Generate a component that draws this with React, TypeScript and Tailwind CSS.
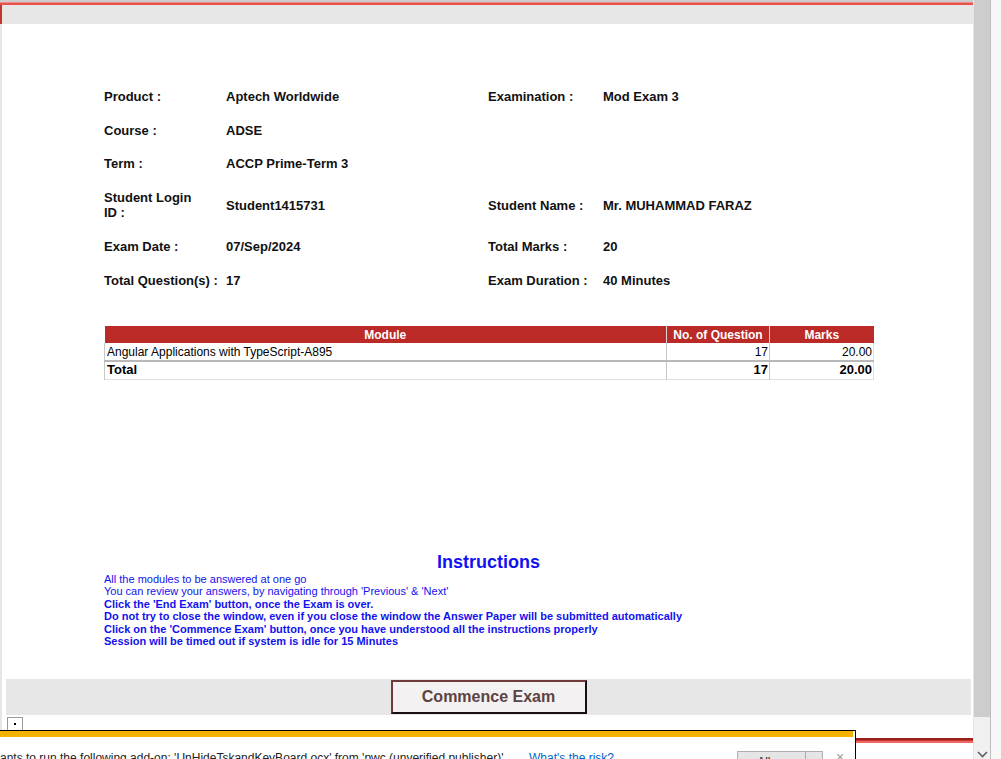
import React from 'react';

const info: [string, string, string, string][] = [
  ['Product :', 'Aptech Worldwide', 'Examination :', 'Mod Exam 3'],
  ['Course :', 'ADSE', '', ''],
  ['Term :', 'ACCP Prime-Term 3', '', ''],
  ['Student Login\nID :', 'Student1415731', 'Student Name :', 'Mr. MUHAMMAD FARAZ'],
  ['Exam Date :', '07/Sep/2024', 'Total Marks :', '20'],
  ['Total Question(s) :', '17', 'Exam Duration :', '40 Minutes'],
];

const rowHeights = ['h-[34px]', 'h-[34px]', 'h-[33px]', 'h-[50px]', 'h-[33px]', 'h-[34px]'];

const instructions = [
  { text: 'All the modules to be answered at one go', bold: false },
  { text: "You can review your answers, by navigating through 'Previous' & 'Next'", bold: false },
  { text: "Click the 'End Exam' button, once the Exam is over.", bold: true },
  { text: 'Do not try to close the window, even if you close the window the Answer Paper will be submitted automatically', bold: true },
  { text: "Click on the 'Commence Exam' button, once you have understood all the instructions properly", bold: true },
  { text: 'Session will be timed out if system is idle for 15 Minutes', bold: true },
];

function InfoGrid() {
  return (
    <div className="pl-[102px] pt-[55px]">
      {info.map((row, i) => (
        <div key={i} className={`flex items-center ${rowHeights[i]} text-[13px] font-bold text-[#111] leading-[15px]`}>
          <div className="w-[122px] whitespace-pre-line">{row[0]}</div>
          <div className="w-[262px]">{row[1]}</div>
          <div className="w-[115px]">{row[2]}</div>
          <div>{row[3]}</div>
        </div>
      ))}
    </div>
  );
}

function ModuleTable() {
  return (
    <div className="pl-[102px] pt-[29px]">
      <table className="w-[770px] border-collapse text-[12px] leading-[16px] text-black">
        <thead>
          <tr className="bg-[#bb2a26] text-white h-[17px]">
            <th className="font-bold text-center border-r border-[#d9d9d9]">Module</th>
            <th className="w-[103px] font-bold text-center border-r border-[#d9d9d9]">No. of Question</th>
            <th className="w-[104px] font-bold text-center">Marks</th>
          </tr>
        </thead>
        <tbody>
          <tr className="h-[18px] border-b-2 border-[#b8b8b8]">
            <td className="pl-[2px] border-l border-r border-[#c8c8c8]">Angular Applications with TypeScript-A895</td>
            <td className="text-right pr-[1px] border-r border-[#c8c8c8]">17</td>
            <td className="text-right pr-[1px] border-r border-[#e0e0e0]">20.00</td>
          </tr>
          <tr className="h-[18px] border-b border-[#e0e0e0] font-bold text-[13px]">
            <td className="pl-[2px] border-l border-r border-[#c8c8c8]">Total</td>
            <td className="text-right pr-[1px] border-r border-[#c8c8c8]">17</td>
            <td className="text-right pr-[1px] border-r border-[#e0e0e0]">20.00</td>
          </tr>
        </tbody>
      </table>
    </div>
  );
}

function Instructions() {
  return (
    <div className="pt-[171px] text-[#1212f0]">
      <div className="text-center text-[18px] font-bold leading-[22px] pl-[2px]">Instructions</div>
      <div className="pl-[102px] text-[11px] leading-[12.6px]">
        {instructions.map((ins, i) => (
          <div key={i} className={ins.bold ? 'font-bold' : ''}>{ins.text}</div>
        ))}
      </div>
    </div>
  );
}

function Notification() {
  return (
    <div className="absolute left-0 top-[730px] w-[856px] h-[29px] border-t border-r border-black bg-white font-['Liberation_Sans',Arial,sans-serif]">
      <div className="h-[6px] bg-[#f2b300] mr-[2px]" />
      <div className="h-[22px] relative">
        <span className="absolute left-0 top-[13px] text-[12px] text-[#222] whitespace-nowrap leading-[16px]">
          ants to run the following add-on: 'UnHideTskandKeyBoard.ocx' from 'pwc (unverified publisher)'.
        </span>
        <span className="absolute left-[529px] top-[13px] text-[12px] text-[#0066cc] leading-[16px]">What's the risk?</span>
        <div className="absolute left-[737px] top-[14px] flex h-[20px] border border-[#adadad] bg-[#e5e5e5]">
          <div className="w-[67px] text-center text-[12px] text-[#222] leading-[16px] pt-[2px]">Allow</div>
          <div className="w-[17px] border-l border-[#adadad] flex justify-center pt-[7px]">
            <div className="w-0 h-0 border-l-[4px] border-r-[4px] border-t-[5px] border-l-transparent border-r-transparent border-t-black" />
          </div>
        </div>
        <span className="absolute left-[836px] top-[12px] text-[14px] text-[#999] leading-[16px]">×</span>
      </div>
    </div>
  );
}

export default function App() {
  return (
    <div className="relative w-[1001px] h-[759px] overflow-hidden flex bg-white font-['Liberation_Sans',Arial,sans-serif]">
      <div className="w-[973px] flex flex-col">
        <div className="h-[2px] bg-[#cdcdcd]" />
        <div className="h-[1px] bg-[#ef8a86]" />
        <div className="h-[2px] bg-[#e8524c]" />
        <div className="h-[19px] flex">
          <div className="w-[2px] bg-[#c4342c]" />
          <div className="flex-1 bg-[#e6e7e6]" />
        </div>
        <div className="flex-1 flex">
          <div className="w-[2px] bg-[#e6e6e6]" />
          <div className="flex-1 flex flex-col">
            <InfoGrid />
            <ModuleTable />
            <Instructions />
            <div className="mt-[auto] mb-[44px] mx-[4px] mr-[2px] h-[36px] bg-[#e6e7e6] flex justify-center items-center">
              <button className="w-[196px] h-[34px] bg-[#f3f1f1] border-2 border-t-[#6e3a3a] border-l-[#6e3a3a] border-r-[#1a1010] border-b-[#1a1010] text-[16px] font-bold text-[#5b4343]">
                Commence Exam
              </button>
            </div>
          </div>
        </div>
      </div>
      <div className="w-[17px] flex flex-col bg-[#f0f0f0] border-l border-[#e6e6e6]">
        <div className="h-[717px] bg-[#cdcdcd]" />
        <div className="flex-1 flex items-end justify-center pb-[1px]">
          <svg width="11" height="7" viewBox="0 0 11 7">
            <path d="M1 1 L5.5 5.5 L10 1" fill="none" stroke="#606060" strokeWidth="1.6" />
          </svg>
        </div>
      </div>
      <div className="w-[1px] bg-[#bdbdbd]" />
      <div className="flex-1 bg-[#f7f7f7]" />

      <div className="absolute left-[7px] top-[717px] w-[16px] h-[14px] border border-[#9a9a9a] bg-white flex justify-center items-center">
        <div className="w-[2px] h-[2px] bg-black" />
      </div>
      <div className="absolute left-[855px] top-[738px] w-[118px] h-[5px] flex flex-col">
        <div className="h-[2px] bg-[#9b1f1a]" />
        <div className="h-[1px] bg-[#c8382f]" />
        <div className="h-[2px] bg-[#ec6a63]" />
      </div>
      <Notification />
    </div>
  );
}
